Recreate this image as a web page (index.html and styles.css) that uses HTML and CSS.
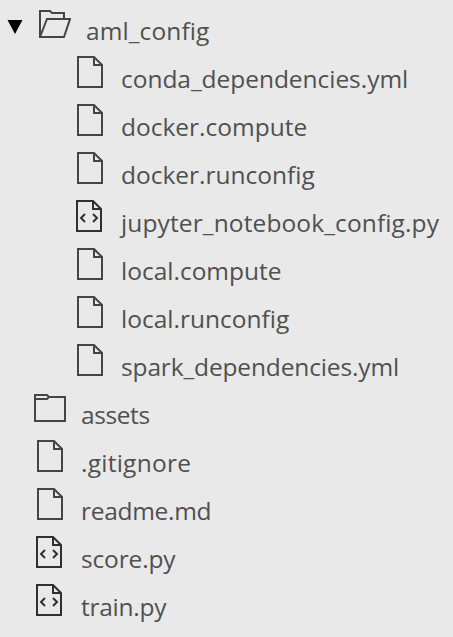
FILE: index.html
```html
<!DOCTYPE html>
<html lang="en">
<head>
<meta charset="utf-8">
<title>Files</title>
<link rel="stylesheet" href="styles.css">
</head>
<body>
<svg class="defs" aria-hidden="true">
  <symbol id="file" viewBox="0 0 26 32"><path d="M1 1H17L25 9V31H1ZM17 1V9H25"/></symbol>
  <symbol id="code" viewBox="0 0 26 32"><path d="M1 1H17L25 9V31H1ZM17 1V9H25M9 14L5 18L9 22M17 14L21 18L17 22"/></symbol>
  <symbol id="folder" viewBox="0 0 32 28"><path d="M1 5V1H13L15 3H31V27H1V5H13L15 3"/></symbol>
  <symbol id="open" viewBox="0 0 32 28"><path d="M1 27V1H11L13 3H25V9M1 27L8 9H31L25 27Z"/></symbol>
</svg>
<ul class="tree">
  <li class="row parent"><svg class="arrow" viewBox="0 0 16 14"><path d="M0.5 0H15.5L8 14Z"/></svg><svg class="icon dir"><use href="#open"/></svg><span class="name n-aml">aml_config</span></li>
  <li class="row child"><svg class="icon"><use href="#file"/></svg><span class="name n-conda">conda_dependencies.yml</span></li>
  <li class="row child"><svg class="icon"><use href="#file"/></svg><span class="name n-dcomp">docker.compute</span></li>
  <li class="row child"><svg class="icon"><use href="#file"/></svg><span class="name n-drun">docker.runconfig</span></li>
  <li class="row child"><svg class="icon code"><use href="#code"/></svg><span class="name n-jup">jupyter_notebook_config.py</span></li>
  <li class="row child"><svg class="icon"><use href="#file"/></svg><span class="name n-lcomp">local.compute</span></li>
  <li class="row child"><svg class="icon"><use href="#file"/></svg><span class="name n-lrun">local.runconfig</span></li>
  <li class="row child"><svg class="icon"><use href="#file"/></svg><span class="name n-spark">spark_dependencies.yml</span></li>
  <li class="row"><svg class="icon dir closed"><use href="#folder"/></svg><span class="name n-assets">assets</span></li>
  <li class="row"><svg class="icon"><use href="#file"/></svg><span class="name n-git">.gitignore</span></li>
  <li class="row"><svg class="icon"><use href="#file"/></svg><span class="name n-readme">readme.md</span></li>
  <li class="row"><svg class="icon code"><use href="#code"/></svg><span class="name n-score">score.py</span></li>
  <li class="row"><svg class="icon code"><use href="#code"/></svg><span class="name n-train">train.py</span></li>
</ul>
</body>
</html>
```
FILE: styles.css
```css
body {
  margin: 0;
  background: #e9e9e9;
  color: #505050;
  font: 24.5px/48px "Open Sans", "Noto Sans", sans-serif;
  font-variant-ligatures: none;
}
.defs { position: absolute; width: 0; height: 0; }
.tree { margin: 0; padding: 0; list-style: none; }
.row {
  display: flex;
  align-items: flex-start;
  height: 48px;
  padding-left: 37px;
  white-space: nowrap;
}
.child { padding-left: 77px; }
.parent { padding-left: 7px; }
.icon {
  flex: none;
  width: 26px;
  height: 32px;
  margin: 8px 18px 0 0;
  fill: none;
  stroke: #454545;
  stroke-width: 2;
}
.code { margin-left: -1px; margin-right: 19px; stroke: #303030; }
.dir { width: 32px; height: 28px; margin: 10px 15px 0 0; }
.closed { margin-left: -3px; }
.arrow { flex: none; width: 16px; height: 14px; margin: 20px 16px 0 0; fill: #000; }
.name { padding-top: 7px; }
.n-aml { letter-spacing: 0.1px; }
.n-conda { letter-spacing: -0.04px; }
.n-jup { letter-spacing: 0.12px; }
.n-spark { letter-spacing: -0.14px; }
.n-assets { letter-spacing: -0.4px; }
.n-git { letter-spacing: 0.25px; }
.n-readme { letter-spacing: -0.3px; }
.n-score { letter-spacing: -0.15px; }
.n-train { letter-spacing: -0.25px; }
```
